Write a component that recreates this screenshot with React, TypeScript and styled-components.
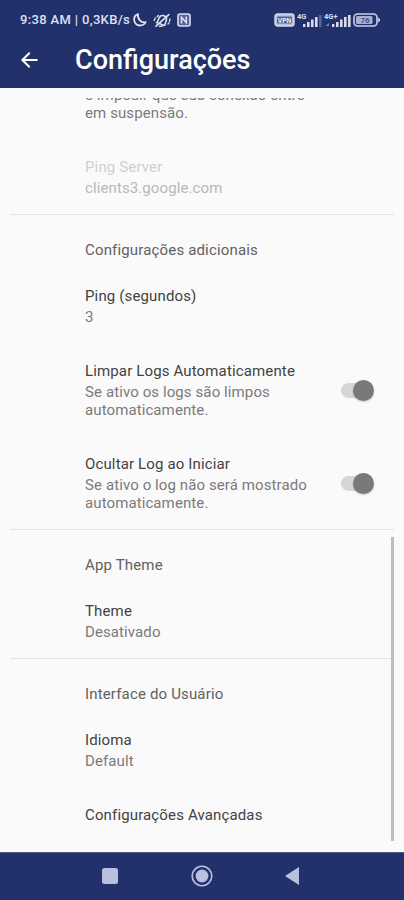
import React from 'react';
import styled, { createGlobalStyle } from 'styled-components';

const NAVY = '#22316c';

const GlobalStyle = createGlobalStyle`
  * { box-sizing: border-box; }
  body { margin: 0; background: #fafafa; font-family: Roboto, "Liberation Sans", sans-serif; }
`;

const Screen = styled.div`
  width: 404px;
  height: 900px;
  display: flex;
  flex-direction: column;
  background: #fafafa;
  overflow: hidden;
`;

const StatusBar = styled.div`
  height: 40px;
  flex: none;
  display: flex;
  align-items: center;
  justify-content: space-between;
  padding: 0 23px 0 20px;
  background: ${NAVY};
  color: #dde1f2;
`;

const StatusGroup = styled.div<{ $gap: number }>`
  display: flex;
  align-items: center;
  gap: ${p => p.$gap}px;
  svg { display: block; flex: none; }
`;

const Clock = styled.span`
  font-size: 13px;
  font-weight: 500;
  line-height: 16px;
  letter-spacing: 0.34px;
  white-space: nowrap;
  width: 111px;
`;

const AppBar = styled.header`
  height: 48px;
  flex: none;
  display: flex;
  align-items: center;
  padding: 0 0 8px 20px;
  background: ${NAVY};
  color: #fff;
  svg { display: block; }
`;

const AppTitle = styled.h1`
  margin: 0 0 0 35px;
  font-size: 27px;
  line-height: 32px;
  font-weight: 500;
  letter-spacing: 0;
`;

const Body = styled.main`
  flex: 1;
  min-height: 0;
  display: flex;
  padding: 10px 10px 0;
  position: relative;
`;

const List = styled.div`
  flex: 1;
  overflow: hidden;
`;

const Scroller = styled.div`
  margin-top: -33px;
`;

const Scrollbar = styled.div`
  position: absolute;
  right: 10px;
  top: 449px;
  width: 3px;
  height: 304px;
  background: #bdbdbd;
`;

const Section = styled.section<{ $divided?: boolean }>`
  border-top: ${p => (p.$divided ? '1px solid #e2e2e2' : '0')};
  margin-top: ${p => (p.$divided ? '-1px' : '0')};
`;

const SectionTitle = styled.h2`
  margin: 0;
  padding: 26px 0 10px 75px;
  font-size: 15px;
  line-height: 18px;
  font-weight: 400;
  letter-spacing: 0.16px;
  color: #616161;
`;

const Preference = styled.div<{ $disabled?: boolean }>`
  display: flex;
  align-items: center;
  justify-content: space-between;
  padding: 18px 20px 18px 75px;
  opacity: ${p => (p.$disabled ? 0.52 : 1)};
`;

const PrefTitle = styled.div<{ $light?: boolean }>`
  font-size: 15px;
  line-height: 18px;
  letter-spacing: 0.14px;
  color: ${p => (p.$light ? '#a8a8a8' : '#424242')};
  white-space: nowrap;
`;

const Summary = styled.div`
  margin-top: 3px;
  font-size: 15px;
  line-height: 18px;
  letter-spacing: 0.1px;
  color: #7b7b7b;
  white-space: pre;
`;

const Track = styled.div`
  width: 33px;
  height: 22px;
  flex: none;
  display: flex;
  align-items: center;
  position: relative;
  &::before {
    content: '';
    width: 28px;
    height: 15px;
    border-radius: 8px;
    background: #d6d6d6;
  }
`;

const Thumb = styled.span`
  position: absolute;
  right: 0;
  top: 0;
  width: 21px;
  height: 21px;
  border-radius: 50%;
  background: #797979;
  box-shadow: 0 1px 2px rgba(0, 0, 0, 0.2);
`;

const NavBar = styled.nav`
  height: 48px;
  flex: none;
  display: flex;
  align-items: center;
  justify-content: space-between;
  padding: 0 104px 1px 101px;
  background: ${NAVY};
  border-top: 1px solid #4d5b8c;
  svg { display: block; }
`;

const Switch = () => (
  <Track><Thumb /></Track>
);

const Moon = () => (
  <svg width="14" height="14" viewBox="0 0 14 14" fill="none" stroke="currentColor" strokeWidth="1.8" strokeLinejoin="round">
    <path d="M5 1.2C2.6 2 1.1 4 1.1 6.5c0 3.4 2.700 6 6 6 2.500 0 4.600-1.300 5.600-3.500C8.500 10.300 4.300 6.500 5 1.200Z" />
  </svg>
);

const Muted = () => (
  <svg width="18" height="15" viewBox="0 0 18 15" fill="none" stroke="currentColor" strokeWidth="1.6" strokeLinecap="round">
    <path d="M3.500 9.500 11.500 12.500M4.200 9.500 6 5.200C7 3 9 2 11 2.800s3 2.800 2.200 5l-1.500 4.500M6.500 13.300h2.500" />
    <path d="M3 13.200 15.800 1.600" strokeWidth="1.700" />
    <path d="M1.200 7.500 2.200 5M4 3.800 5.300 2.500M17 6 16.400 8.500M15 11l1-1" strokeWidth="1.300" />
  </svg>
);

const Nfc = () => (
  <svg width="14" height="14" viewBox="0 0 14 14" fill="none" stroke="currentColor">
    <rect x="1" y="1" width="12" height="12" rx="2" strokeWidth="1.600" fill="#56639a" />
    <path d="M4.500 10.500V4.200l4.800 5.500V3.500" strokeWidth="1.500" />
  </svg>
);

const IconText = styled.text`
  font-family: Roboto, sans-serif;
  font-weight: 700;
`;

const Vpn = () => (
  <svg width="21" height="14" viewBox="0 0 21 14">
    <rect x="1" y="1" width="19" height="12" rx="2.500" fill="#b9c0dc" stroke="#d4d9ec" strokeWidth="1.400" />
    <rect x="3" y="3.600" width="15" height="7" rx="1" fill="#53608f" />
    <IconText x="10.500" y="9.600" fontSize="6.800" textAnchor="middle" fill="#e6e9f5">VPN</IconText>
  </svg>
);

const Signal = ({ label, weak }: { label: string; weak?: boolean }) => (
  <svg width={weak ? 25 : 27} height="15" viewBox={weak ? '0 0 25 15' : '0 0 27 15'} fill="#d8dcee">
    <IconText x="0" y="6" fontSize="7.500">{label}</IconText>
    <g transform={weak ? 'translate(0 0)' : 'translate(2 0)'}>
      <rect x="6" y="11" width="2.400" height="3" />
      <rect x="10" y="9" width="2.600" height="5" />
      <rect x="14" y="6.500" width="2.600" height="7.500" />
      <rect x="18" y="4" width="2.600" height="10" />
      <rect x="22" y="2" width="2.600" height="12" opacity={weak ? 0.3 : 1} />
    </g>
    {!weak && <path d="M1.500 13 5 10v3Z" opacity="0.500" />}
  </svg>
);

const Battery = () => (
  <svg width="28" height="14" viewBox="0 0 28 14">
    <rect x="1" y="1" width="23" height="12" rx="3.500" fill={NAVY} stroke="#ccd2e8" strokeWidth="1.600" />
    <rect x="3" y="3" width="16.500" height="8" rx="1.500" fill="#a9b1d1" />
    <IconText x="12" y="10" fontSize="8" textAnchor="middle" fill="#47548a">76</IconText>
    <path d="M25.200 4.500 27 6v2l-1.800 1.500Z" fill="#ccd2e8" />
  </svg>
);

const BackArrow = () => (
  <svg width="20" height="20" viewBox="0 0 20 20" fill="none" stroke="currentColor" strokeWidth="2">
    <path d="M17.500 10H3M9.700 2.700 2.400 10l7.300 7.300" />
  </svg>
);

export default function App() {
  return (
    <Screen>
      <GlobalStyle />
      <StatusBar>
        <StatusGroup $gap={6}>
          <StatusGroup $gap={2}>
            <Clock>9:38 AM | 0,3KB/s</Clock>
            <Moon />
          </StatusGroup>
          <Muted />
          <Nfc />
        </StatusGroup>
        <StatusGroup $gap={2}>
          <Vpn />
          <Signal label="4G" weak />
          <Signal label="4G+" />
          <Battery />
        </StatusGroup>
      </StatusBar>
      <AppBar>
        <BackArrow />
        <AppTitle>Configurações</AppTitle>
      </AppBar>
      <Body>
        <List>
          <Scroller>
            <Section>
              <Preference>
                <Summary>{'e impedir que sua conexão entre\nem suspensão.'}</Summary>
              </Preference>
              <Preference $disabled>
                <div>
                  <PrefTitle $light>Ping Server</PrefTitle>
                  <Summary>clients3.google.com</Summary>
                </div>
              </Preference>
            </Section>
            <Section $divided>
              <SectionTitle>Configurações adicionais</SectionTitle>
              <Preference>
                <div>
                  <PrefTitle>Ping (segundos)</PrefTitle>
                  <Summary>3</Summary>
                </div>
              </Preference>
              <Preference>
                <div>
                  <PrefTitle>Limpar Logs Automaticamente</PrefTitle>
                  <Summary>{'Se ativo os logs são limpos\nautomaticamente.'}</Summary>
                </div>
                <Switch />
              </Preference>
              <Preference>
                <div>
                  <PrefTitle>Ocultar Log ao Iniciar</PrefTitle>
                  <Summary>{'Se ativo o log não será mostrado\nautomaticamente.'}</Summary>
                </div>
                <Switch />
              </Preference>
            </Section>
            <Section $divided>
              <SectionTitle>App Theme</SectionTitle>
              <Preference>
                <div>
                  <PrefTitle>Theme</PrefTitle>
                  <Summary>Desativado</Summary>
                </div>
              </Preference>
            </Section>
            <Section $divided>
              <SectionTitle>Interface do Usuário</SectionTitle>
              <Preference>
                <div>
                  <PrefTitle>Idioma</PrefTitle>
                  <Summary>Default</Summary>
                </div>
              </Preference>
              <Preference>
                <PrefTitle>Configurações Avançadas</PrefTitle>
              </Preference>
            </Section>
          </Scroller>
        </List>
        <Scrollbar />
      </Body>
      <NavBar>
        <svg width="18" height="18" viewBox="0 0 18 18">
          <rect x="1" y="1" width="16" height="16" rx="2.500" fill="#b9c1de" />
        </svg>
        <svg width="22" height="22" viewBox="0 0 22 22">
          <circle cx="11" cy="11" r="9.800" fill="none" stroke="#b9c1de" strokeWidth="1.600" />
          <circle cx="11" cy="11" r="6.400" fill="#b9c1de" />
        </svg>
        <svg width="16" height="20" viewBox="0 0 16 20">
          <path d="M15 1v18L1 10Z" fill="#b9c1de" />
        </svg>
      </NavBar>
    </Screen>
  );
}
